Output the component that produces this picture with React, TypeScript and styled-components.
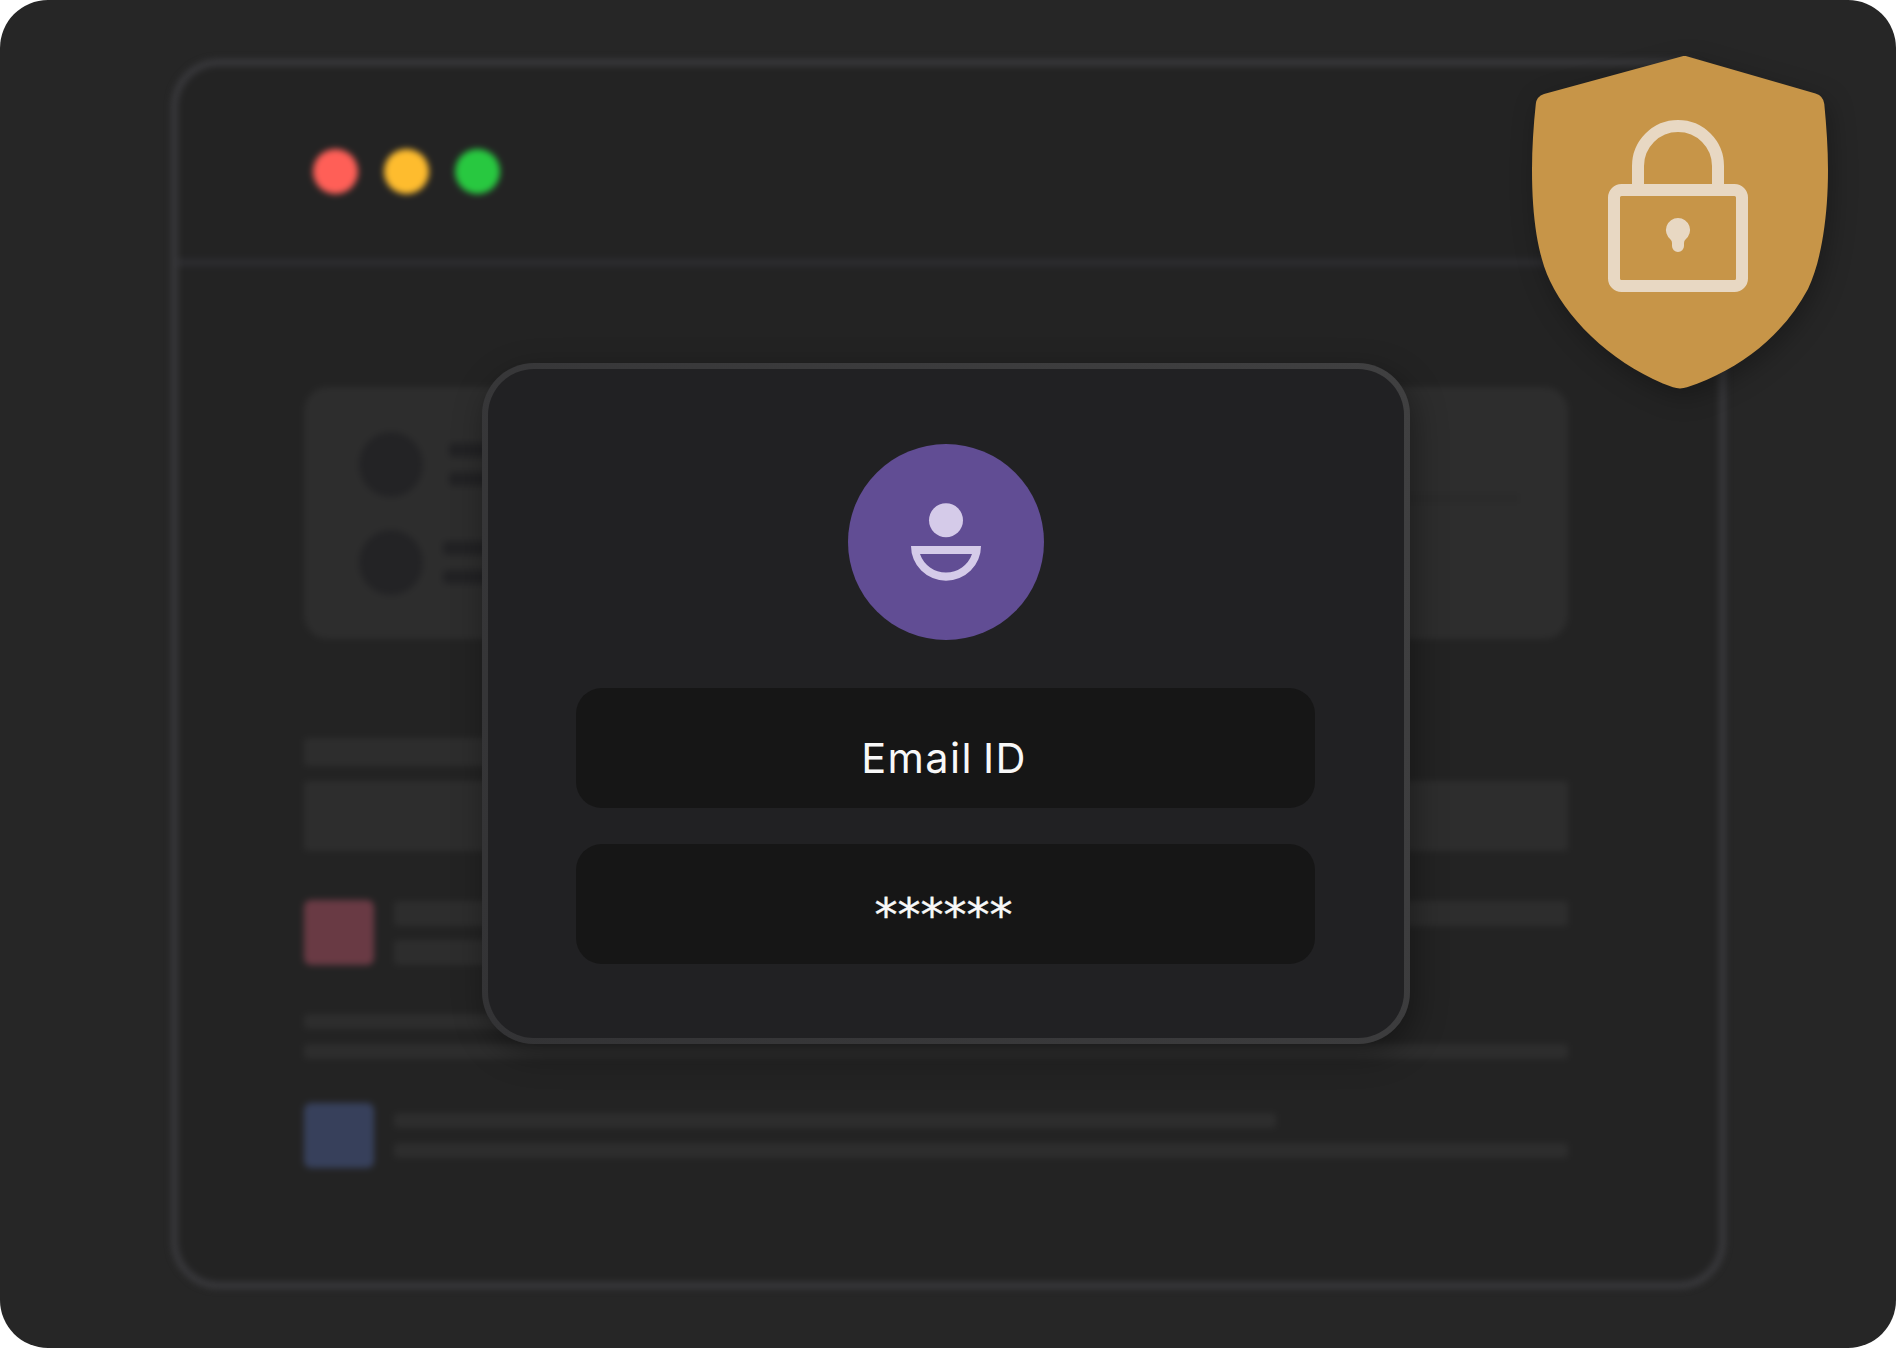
import React from "react";
import styled, { createGlobalStyle } from "styled-components";

const GlobalStyle = createGlobalStyle`
  *, *::before, *::after { box-sizing: border-box; }
  html, body { margin: 0; background: #fff; }
`;

const Stage = styled.main`
  position: relative;
  width: 1896px;
  height: 1348px;
  padding: 59px 171px;
  border-radius: 48px;
  background: #262626;
  overflow: hidden;
  font-family: Inter, "Liberation Sans", sans-serif;
`;

const Browser = styled.div`
  display: flex;
  flex-direction: column;
  width: 1555px;
  height: 1230px;
  border: 7px solid #38383b;
  border-radius: 48px;
  background: #232323;
  filter: blur(3px);
`;

const TitleBar = styled.div`
  display: flex;
  gap: 26px;
  height: 200px;
  padding: 83px 0 0 135px;
  border-bottom: 7px solid #2d2d30;
`;

const Dot = styled.span<{ $color: string }>`
  width: 45px;
  height: 45px;
  border-radius: 50%;
  background: ${(p) => p.$color};
`;

const Page = styled.div`
  display: flex;
  flex-direction: column;
  width: 1390px;
  padding: 121px 0 0 126px;
`;

const Panel = styled.div`
  display: flex;
  align-items: center;
  justify-content: space-between;
  height: 252px;
  padding: 0 49px 0 55px;
  border-radius: 24px;
  background: #2d2d2d;
`;

const People = styled.div`
  display: flex;
  flex-direction: column;
  gap: 33px;
  width: 560px;
`;

const FaintRule = styled.span`
  width: 400px;
  height: 11px;
  margin-top: -30px;
  border-radius: 4px;
  background: #2b2b2b;
`;

const Person = styled.div<{ $gap: number }>`
  display: flex;
  align-items: center;
  gap: ${(p) => p.$gap}px;
`;

const Portrait = styled.span`
  width: 64px;
  height: 65px;
  border-radius: 50%;
  background: #232325;
`;

const Lines = styled.div<{ $gap: number }>`
  display: flex;
  flex: 1;
  flex-direction: column;
  gap: ${(p) => p.$gap}px;
`;

const Line = styled.span<{ $h: number; $w?: string; $dark?: boolean }>`
  width: ${(p) => p.$w ?? "100%"};
  height: ${(p) => p.$h}px;
  border-radius: 4px;
  background: ${(p) => (p.$dark ? "#222224" : "#2d2d2d")};
`;

const Block = styled.div<{ $top: number; $gap: number }>`
  display: flex;
  flex-direction: column;
  gap: ${(p) => p.$gap}px;
  margin-top: ${(p) => p.$top}px;
`;

const Entry = styled.div<{ $top: number }>`
  display: flex;
  align-items: center;
  gap: 20px;
  margin-top: ${(p) => p.$top}px;
`;

const Thumb = styled.span<{ $color: string }>`
  width: 70px;
  height: 65px;
  border-radius: 7px;
  background: ${(p) => p.$color};
`;

const Dialog = styled.form`
  position: absolute;
  top: 362.5px;
  left: 482px;
  display: flex;
  flex-direction: column;
  align-items: center;
  width: 928px;
  height: 681.5px;
  padding: 75.5px 87px 0;
  border: 6px solid transparent;
  border-radius: 52px;
  background:
    linear-gradient(#212123, #212123) padding-box,
    linear-gradient(60deg, #333335, #404041) border-box;
  box-shadow: 4px 10px 32px rgba(0, 0, 0, 0.36);
`;

const Avatar = styled.div`
  width: 196px;
  height: 196px;
  margin-bottom: 48px;
  border-radius: 50%;
  background: #614d94;
`;

const Field = styled.div`
  display: flex;
  justify-content: center;
  width: 739px;
  height: 120px;
  margin: 0 1px 36px 0;
  border-radius: 26px;
  background: #161616;
  color: #f8f8f8;
  white-space: pre;
`;

const Label = styled.span`
  margin-left: -3px;
  padding-top: 45px;
  font-size: 41.5px;
  letter-spacing: 1.4px;
  word-spacing: -3px;
  line-height: 50px;
`;

const Secret = styled.span`
  margin-left: -4px;
  padding-top: 44px;
  font-family: "DejaVu Sans", sans-serif;
  font-size: 46px;
  line-height: 54px;
  -webkit-text-stroke: 0.4px #f8f8f8;
`;

const Badge = styled.div`
  position: absolute;
  top: 56px;
  left: 1532px;
  width: 296px;
  height: 333px;
  filter: drop-shadow(4px 8px 12px rgba(0, 0, 0, 0.28));
`;

const Drawing = styled.svg`
  display: block;
  width: 100%;
  height: 100%;
`;

const PersonIcon = () => (
  <Drawing viewBox="848 444 196 196">
    <circle cx="946" cy="520.2" r="17" fill="#d5cbe9" />
    <path
      d="M911 546H981A35 34.7 0 0 1 911 546ZM920 554A27.5 27.5 0 0 0 972 554Z"
      fill="#d5cbe9"
      fillRule="evenodd"
    />
  </Drawing>
);

const ShieldIcon = () => (
  <Drawing viewBox="1532 56 296 333">
    <path
      d="M1681.5 56.5Q1684.5 55.3 1687.5 56.5L1815.5 93.5Q1823.5 96 1824.3 104C1826.500 127 1828 148 1828 170C1828 218 1821 262 1808 289C1784 334 1742 369 1687 387.3Q1680 389.5 1673 387.3C1619 368 1571 325 1550 281C1538 256 1532 218 1532 170C1532 148 1533.5 125 1535.8 104Q1536.5 96.5 1544 94Z"
      fill="#c79548"
    />
    <g fill="none" stroke="#e8d8c3" strokeWidth="12">
      <rect x="1614" y="190" width="128" height="96" rx="7.5" />
      <path d="M1638 187V166A40 40 0 0 1 1718 166V187" />
    </g>
    <path
      d="M1678 218A12 12 0 0 1 1685.5 239.4Q1684 240.8 1684 243V246A6 6 0 0 1 1672 246V243Q1672 240.8 1670.5 239.4A12 12 0 0 1 1678 218Z"
      fill="#e8d8c3"
    />
  </Drawing>
);

export default function App() {
  return (
    <>
      <GlobalStyle />
      <Stage>
        <Browser>
          <TitleBar>
            <Dot $color="#ff5f57" />
            <Dot $color="#febc2e" />
            <Dot $color="#28c840" />
          </TitleBar>
          <Page>
            <Panel>
              <People>
                <Person $gap={26}>
                  <Portrait />
                  <Lines $gap={15}>
                    <Line $h={14} $w="400px" $dark />
                    <Line $h={14} $w="400px" $dark />
                  </Lines>
                </Person>
                <Person $gap={20}>
                  <Portrait />
                  <Lines $gap={15}>
                    <Line $h={14} $w="400px" $dark />
                    <Line $h={14} $w="400px" $dark />
                  </Lines>
                </Person>
              </People>
              <FaintRule />
            </Panel>
            <Block $top={99} $gap={15}>
              <Line $h={28} $w="500px" />
              <Line $h={70} />
            </Block>
            <Entry $top={49}>
              <Thumb $color="#693a44" />
              <Lines $gap={14}>
                <Line $h={25} />
                <Line $h={25} $w="700px" />
              </Lines>
            </Entry>
            <Block $top={49} $gap={15}>
              <Line $h={15} $w="800px" />
              <Line $h={15} />
            </Block>
            <Entry $top={43.5}>
              <Thumb $color="#37405b" />
              <Lines $gap={15}>
                <Line $h={15} $w="882px" />
                <Line $h={15} />
              </Lines>
            </Entry>
          </Page>
        </Browser>
        <Dialog>
          <Avatar>
            <PersonIcon />
          </Avatar>
          <Field>
            <Label>Email ID</Label>
          </Field>
          <Field>
            <Secret>******</Secret>
          </Field>
        </Dialog>
        <Badge>
          <ShieldIcon />
        </Badge>
      </Stage>
    </>
  );
}
